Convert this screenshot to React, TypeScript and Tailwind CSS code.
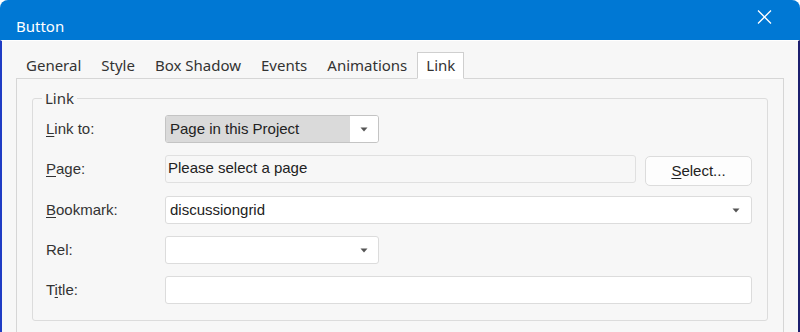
import React from "react";

const tabs = ["General", "Style", "Box Shadow", "Events", "Animations", "Link"];

function Arrow() {
  return (
    <svg width="8" height="5" viewBox="0 0 8 5" className="shrink-0">
      <path d="M0.5 0.5 H7.5 L4 4.5 Z" fill="#555" />
    </svg>
  );
}

function Key({ children }: { children: React.ReactNode }) {
  return <span className="underline underline-offset-[2px] decoration-1">{children}</span>;
}

function Label({ children }: { children: React.ReactNode }) {
  return <div className="w-[119px] shrink-0 text-[#333]">{children}</div>;
}

export default function App() {
  return (
    <div className="w-[800px] h-[332px] overflow-hidden rounded-t-[8px] bg-[#f7f7f7] flex flex-col">
      {/* title bar */}
      <div className="h-10 shrink-0 bg-[#0078d4] flex items-start justify-between pl-4 pr-[28px] font-['Noto_Sans',sans-serif] text-[15px] text-white">
        <span className="mt-[16px] leading-[20px]">Button</span>
        <svg width="15" height="14" viewBox="0 0 15 14" className="mt-[10px]">
          <path d="M1 0.5 L14 13.5 M14 0.5 L1 13.5" stroke="#fff" strokeWidth="1.3" />
        </svg>
      </div>

      <div className="flex-1 flex flex-col border-t border-white border-l-2 border-l-[#1f3cc4] border-r-2 border-r-[#1c1f6e] px-[14px]">
        {/* tabs */}
        <div className="mt-[11px] flex items-end h-[26px] font-['Noto_Sans',sans-serif] text-[15px] text-[#333]">
          {tabs.map((t) =>
            t === "Link" ? (
              <div
                key={t}
                className="relative z-10 -mb-px h-[27px] px-[8px] flex items-center bg-white border border-[#cfcfcf] border-b-white"
              >
                {t}
              </div>
            ) : (
              <div key={t} className="h-[26px] px-[10px] flex items-center">
                {t}
              </div>
            )
          )}
        </div>

        {/* panel */}
        <div className="flex-1 border border-[#d6d6d6] border-b-0 px-[15px] font-['Liberation_Sans',Arial,sans-serif] text-[15px] text-[#222]">
          <fieldset className="mt-[10px] border border-[#dcdcdc] rounded-[3px] pl-[13px] pr-[15px] pb-[16px]">
            <legend className="-ml-[4px] px-[3px] leading-[18px] font-['Noto_Sans',sans-serif] text-[#333]">
              Link
            </legend>

            {/* Link to */}
            <div className="mt-[8px] flex items-center h-[28px]">
              <Label>
                <Key>L</Key>ink to:
              </Label>
              <div className="w-[214px] h-[28px] flex border border-[#c4c4c4] rounded-[3px] overflow-hidden">
                <div className="flex-1 bg-[#dadada] flex items-center pl-[4px]">Page in this Project</div>
                <div className="w-[28px] bg-white flex items-center justify-center">
                  <Arrow />
                </div>
              </div>
            </div>

            {/* Page */}
            <div className="mt-[12px] flex items-start">
              <div className="h-[28px] flex items-center">
                <Label>
                  <Key>P</Key>age:
                </Label>
              </div>
              <div className="flex-1 h-[28px] border border-[#e0e0e0] rounded-[3px] bg-[#f7f7f7] pl-[2px] pt-[2px] leading-[20px]">
                Please select a page
              </div>
              <button className="ml-[9px] mt-px w-[107px] h-[30px] bg-[#fdfdfd] border border-[#dcdcdc] rounded-[5px] text-[#222]">
                <Key>S</Key>elect...
              </button>
            </div>

            {/* Bookmark */}
            <div className="mt-[10px] flex items-center h-[28px]">
              <Label>
                <Key>B</Key>ookmark:
              </Label>
              <div className="flex-1 h-[28px] flex items-center justify-between border border-[#dcdcdc] rounded-[3px] bg-white pl-[4px] pr-[11px]">
                <span>discussiongrid</span>
                <Arrow />
              </div>
            </div>

            {/* Rel */}
            <div className="mt-[12px] flex items-center h-[28px]">
              <Label>Rel:</Label>
              <div className="w-[214px] h-[28px] flex items-center justify-end border border-[#dcdcdc] rounded-[3px] bg-white pr-[10px]">
                <Arrow />
              </div>
            </div>

            {/* Title */}
            <div className="mt-[12px] flex items-center h-[28px]">
              <Label>
                T<Key>i</Key>tle:
              </Label>
              <div className="flex-1 h-[28px] border border-[#dcdcdc] rounded-[3px] bg-white" />
            </div>
          </fieldset>
        </div>
      </div>
    </div>
  );
}
